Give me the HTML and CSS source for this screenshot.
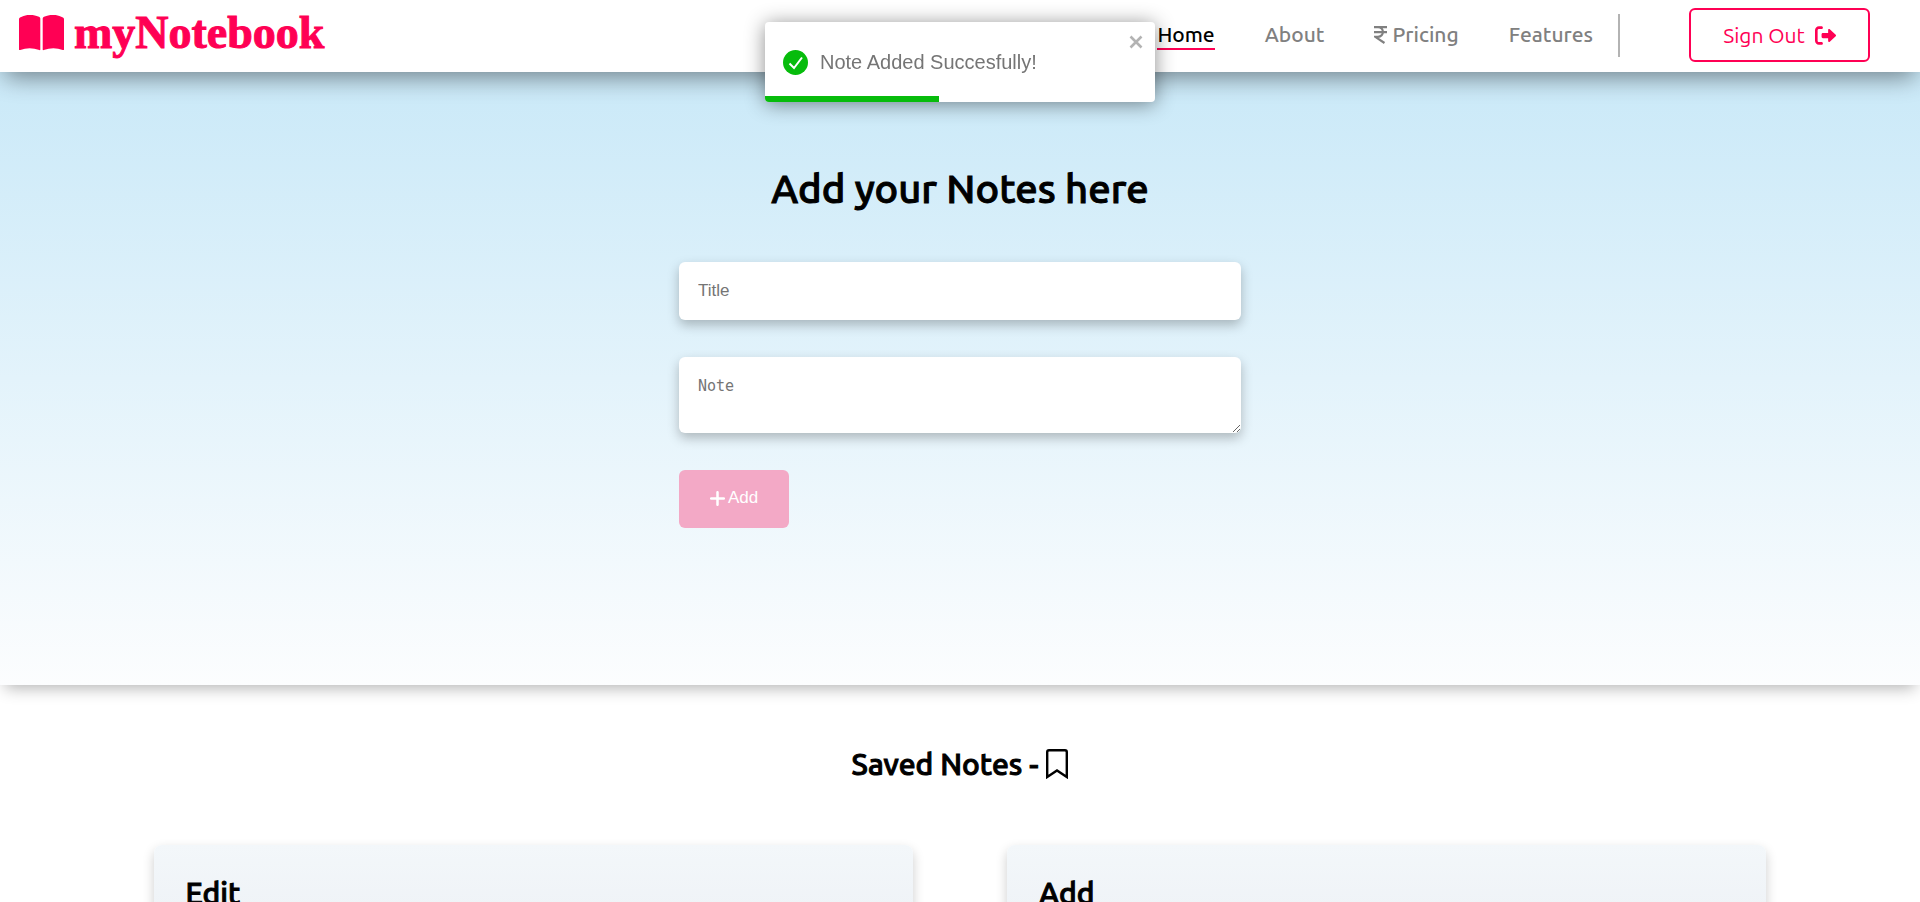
FILE: index.html
```html
<!DOCTYPE html>
<html lang="en">
<head>
<meta charset="utf-8">
<title>myNotebook</title>
<meta name="viewport" content="width=device-width, initial-scale=1">
<link rel="stylesheet" href="styles.css">
</head>
<body>
<header class="navbar">
  <a class="brand" href="#">
    <svg class="brand-icon" viewBox="0 0 45 36" aria-hidden="true"><path d="M0 4Q0 3 1 2.500Q10 -2.500 20 1.800Q21.300 2.400 21.300 3.600V34.500Q21.300 35.500 20.300 35Q10.500 31.500 1.200 35Q0 35.400 0 34.500Z"/><path d="M45 4Q45 3 44 2.500Q35 -2.500 25 1.800Q23.700 2.400 23.700 3.600V34.500Q23.700 35.500 24.700 35Q34.500 31.500 43.800 35Q45 35.400 45 34.500Z"/></svg>
    <span>myNotebook</span>
  </a>
  <nav class="nav">
    <a class="nav-link active" href="#">Home</a>
    <a class="nav-link" href="#">About</a>
    <a class="nav-link" href="#"><svg class="rupee" viewBox="0 0 13 18" stroke-width="2.200" aria-hidden="true"><path d="M0 1.200H13M0 6.200H13M1 1.200H4C10.500 1.200 10.500 10.800 4 10.800H1.200L10.500 17"/></svg>Pricing</a>
    <a class="nav-link" href="#">Features</a>
    <span class="divider"></span>
    <button class="sign-out" type="button">Sign Out
      <svg class="sign-out-icon" viewBox="0 0 512 512" aria-hidden="true"><path d="M96 480h64c17.700 0 32-14.300 32-32s-14.300-32-32-32H96c-17.700 0-32-14.300-32-32V128c0-17.700 14.300-32 32-32h64c17.700 0 32-14.300 32-32s-14.300-32-32-32H96C43 32 0 75 0 128v256C0 437 43 480 96 480zM504.800 238.500l-144.100-136c-7-6.600-17.200-8.400-26-4.600c-8.800 3.800-14.500 12.500-14.500 22.100v72H192c-17.700 0-32 14.300-32 32v64c0 17.700 14.300 32 32 32h128.200v72c0 9.600 5.700 18.200 14.500 22c8.800 3.800 19 2 26-4.600l144.100-136C514.400 264.400 514.400 247.600 504.800 238.500z"/></svg>
    </button>
  </nav>
</header>

<div class="toast" role="status">
  <svg class="toast-check" viewBox="0 0 25 25" aria-hidden="true"><circle cx="12.500" cy="12.500" r="12.500"/><path d="M6.500 13.500L11 18L19 7.500"/></svg>
  <span>Note Added Succesfully!</span>
  <button class="toast-close" type="button" aria-label="Close"><svg viewBox="0 0 14 14" stroke-width="2.600" aria-hidden="true"><path d="M1.500 1.500L12.500 12.500M12.500 1.500L1.500 12.500"/></svg></button>
  <div class="toast-progress"></div>
</div>

<main>
  <section class="composer">
    <h1 class="composer-title">Add your Notes here</h1>
    <form class="note-form">
      <input class="field" type="text" placeholder="Title" aria-label="Title">
      <textarea class="field note-field" rows="2" placeholder="Note" aria-label="Note"></textarea>
      <button class="add-button" type="button" disabled><svg viewBox="0 0 15 15" stroke-width="2.500" aria-hidden="true"><path d="M7.500 1.200V13.800M1.200 7.500H13.800"/></svg>Add</button>
    </form>
  </section>

  <section class="saved">
    <h2 class="saved-title">Saved Notes - <svg viewBox="0 0 22 30" stroke-width="2.400" aria-hidden="true"><path d="M1.200 28V3Q1.200 1.200 3 1.200H19Q20.800 1.200 20.800 3V28L11 21.500Z"/></svg></h2>
    <div class="cards">
      <article class="card"><h3 class="card-title">Edit</h3></article>
      <article class="card"><h3 class="card-title">Add</h3></article>
    </div>
  </section>
</main>
</body>
</html>
```
FILE: styles.css
```css
* { box-sizing: border-box; }
:root { --pink: #ff0054; --green: #07bc0c; --ui: Ubuntu, "Noto Sans", sans-serif; --arial: "Liberation Sans", Arial, sans-serif; }
body { margin: 0; height: 100vh; overflow: hidden; background: #fff; color: #000; font-family: var(--ui); }
svg { fill: none; stroke: currentColor; flex: none; }
h1, h2, h3 { margin: 0; font-weight: 500; -webkit-text-stroke: 1px currentColor; }

.navbar { position: relative; z-index: 1; display: flex; align-items: center; justify-content: space-between; height: 72px; padding: 0 50px 2px 19px; background: #fff; box-shadow: 0 10px 24px -5px rgba(0, 0, 0, .45); }
.brand { display: flex; align-items: center; gap: 10px; padding-bottom: 4px; color: var(--pink); font: bold 46px/54px "Liberation Serif", serif; text-decoration: none; -webkit-text-stroke: 1px currentColor; }
.brand-icon { width: 45px; height: 36px; fill: currentColor; stroke: none; }
.nav { display: flex; align-items: center; }
.nav-link { margin-right: 50px; border-bottom: 2px solid transparent; color: gray; font-size: 21px; line-height: 28px; font-weight: 500; text-decoration: none; }
.nav-link.active { color: #000; border-color: var(--pink); }
.rupee { width: 13px; height: 18px; margin-right: 5px; vertical-align: -2px; }
.divider { width: 2px; height: 43px; margin: 0 69px 0 -25px; background: #b3b3b3; }
.sign-out { display: flex; align-items: center; justify-content: center; gap: 10px; width: 181px; height: 54px; padding: 0; border: 2px solid var(--pink); border-radius: 6px; background: #fff; color: var(--pink); font: 400 21px/28px var(--ui); }
.sign-out-icon { width: 21px; height: 21px; fill: currentColor; stroke: none; }

.toast { position: fixed; z-index: 2; top: 22px; left: 50%; display: flex; align-items: center; gap: 12px; width: 390px; height: 80px; margin-left: -195px; padding: 0 18px; overflow: hidden; border-radius: 4px; background: #fff; color: #757575; font: 20px/24px var(--arial); box-shadow: 0 2px 20px rgba(0, 0, 0, .45); }
.toast-check { width: 25px; height: 25px; stroke: #fff; stroke-width: 2; }
.toast-check circle { fill: var(--green); stroke: none; }
.toast-close { position: absolute; top: 13px; right: 12px; display: flex; padding: 0; border: 0; background: none; color: #b3b3b3; }
.toast-close svg { width: 14px; height: 14px; }
.toast-progress { position: absolute; left: 0; bottom: 0; width: 174px; height: 6px; background: var(--green); }

.composer { display: flex; flex-direction: column; align-items: center; padding: 87px 24px 157px; background: linear-gradient(#cae9f8, #fcfdfe); box-shadow: 0 8px 15px -5px rgba(0, 0, 0, .3); }
.composer-title { margin-bottom: 43px; font-size: 40px; line-height: 60px; }
.note-form { display: flex; flex-direction: column; align-items: flex-start; gap: 37px; width: 100%; max-width: 562px; }
.field { display: block; width: 100%; height: 58px; padding: 19px; border: 0; border-radius: 6px; background: #fff; font: 17px/20px var(--arial); box-shadow: 0 5px 12px rgba(0, 0, 0, .25); }
.note-field { height: 76px; font-family: "DejaVu Sans Mono", monospace; font-size: 15px; resize: vertical; }
.field::placeholder { color: #757575; }
.add-button { display: flex; align-items: center; justify-content: center; gap: 3px; width: 110px; height: 58px; padding: 0 0 2px; border: 0; border-radius: 6px; background: #f3a9c6; color: #fff; font: 17px/20px var(--arial); }
.add-button svg { width: 15px; height: 15px; stroke-linecap: round; }

.saved { padding: 55px 8% 0; }
.saved-title { display: flex; align-items: center; justify-content: center; gap: 8px; margin-bottom: 57px; font-size: 30px; line-height: 48px; }
.saved-title svg { width: 22px; height: 30px; }
.cards { display: grid; grid-template-columns: 1fr 1fr; gap: 94px; }
.card { min-height: 240px; padding: 28px 32px; border-radius: 8px; background: linear-gradient(#f3f7fa, #eff3f7 64px); box-shadow: 0 5px 12px rgba(0, 0, 0, .2); }
.card-title { font-size: 30px; line-height: 40px; }
```
